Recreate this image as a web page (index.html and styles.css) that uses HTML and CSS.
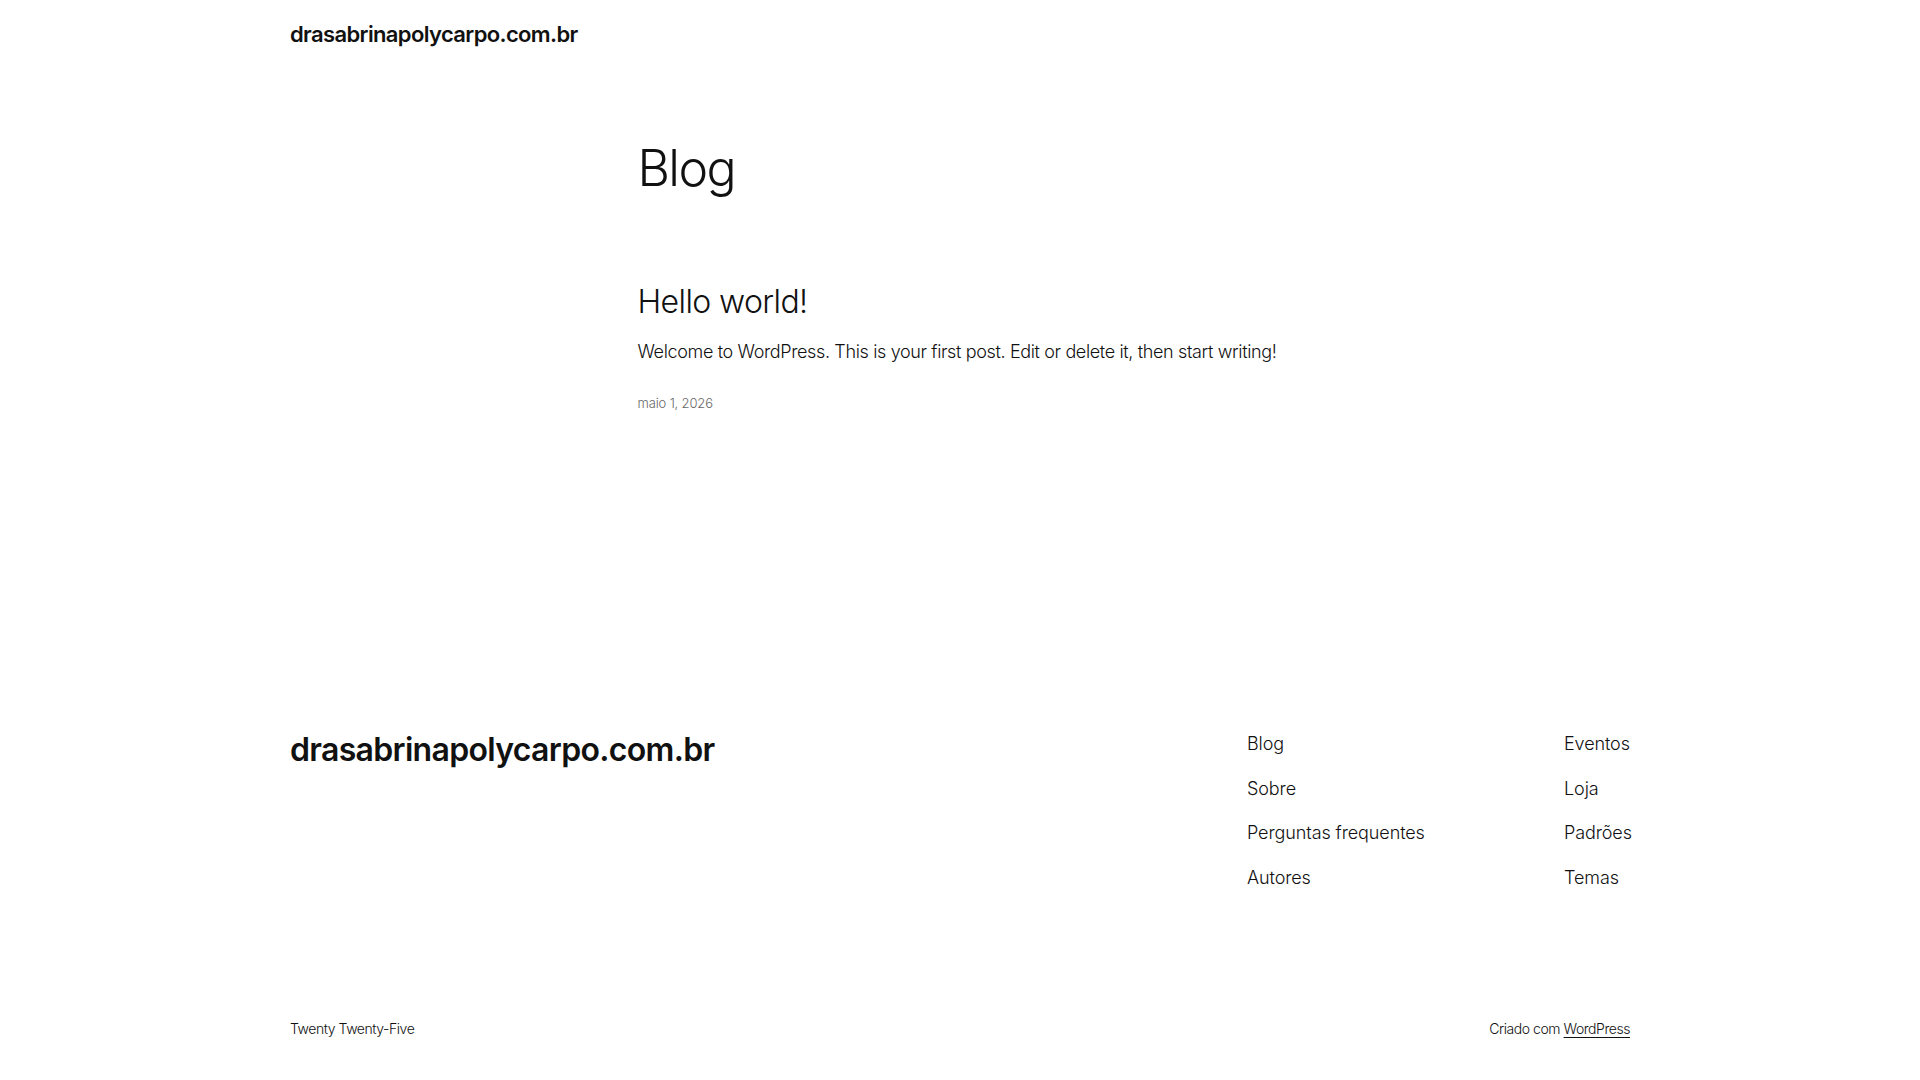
FILE: index.html
```html
<!DOCTYPE html>
<html lang="pt-BR">
<head>
<meta charset="utf-8">
<title>Blog – drasabrinapolycarpo.com.br</title>
<link rel="stylesheet" href="styles.css">
</head>
<body>
<header class="site-header">
  <div class="wide">
    <a class="site-title" href="#">drasabrinapolycarpo.com.br</a>
  </div>
</header>
<main class="site-main">
  <div class="content">
    <h1 class="page-title">Blog</h1>
    <article class="post">
      <h2 class="post-title"><a href="#">Hello world!</a></h2>
      <p class="post-excerpt">Welcome to WordPress. This is your first post. Edit or delete it, then start writing!</p>
      <time class="post-date">maio 1, 2026</time>
    </article>
  </div>
</main>
<footer class="site-footer">
  <div class="wide footer-top">
    <a class="footer-title" href="#">drasabrinapolycarpo.com.br</a>
    <nav class="footer-nav">
      <ul class="nav-col">
        <li><a href="#">Blog</a></li>
        <li><a href="#">Sobre</a></li>
        <li><a href="#">Perguntas frequentes</a></li>
        <li><a href="#">Autores</a></li>
      </ul>
      <ul class="nav-col">
        <li><a href="#">Eventos</a></li>
        <li><a href="#">Loja</a></li>
        <li><a href="#">Padrões</a></li>
        <li><a href="#">Temas</a></li>
      </ul>
    </nav>
  </div>
  <div class="wide footer-bottom">
    <p class="theme-name">Twenty Twenty-Five</p>
    <p class="credit">Criado com <a href="#">WordPress</a></p>
  </div>
</footer>
</body>
</html>
```
FILE: styles.css
```css
* { box-sizing: border-box; }

html, body {
  margin: 0;
  padding: 0;
  background: #ffffff;
}

body {
  font-family: "Inter", "Liberation Sans", sans-serif;
  font-weight: 300;
  color: #111111;
  -webkit-font-smoothing: antialiased;
}

a {
  color: inherit;
  text-decoration: none;
}

.wide {
  width: 1340px;
  margin: 0 auto;
}

.content {
  width: 645px;
  margin: 0 auto;
}

/* Header */
.site-header {
  padding: 19px 0 19px;
}

.site-title {
  display: block;
  font-size: 22px;
  line-height: 31px;
  font-weight: 600;
  letter-spacing: -0.63px;
}

/* Main */
.site-main {
  padding-top: 72px;
  min-height: 662px;
}

.page-title {
  margin: 0;
  font-size: 50px;
  line-height: 54px;
  font-weight: 300;
  letter-spacing: -1.6px;
}

.post {
  margin-top: 89px;
}

.post-title {
  margin: 0;
  font-size: 32px;
  line-height: 36px;
  font-weight: 300;
  letter-spacing: -0.6px;
}

.post-excerpt {
  margin: 19px 0 0;
  font-size: 18px;
  line-height: 25px;
  letter-spacing: -0.36px;
}

.post-date {
  display: block;
  margin-top: 29px;
  font-size: 13px;
  line-height: 20px;
  color: #686868;
  letter-spacing: -0.15px;
}

/* Footer */
.footer-top {
  display: flex;
  justify-content: space-between;
  align-items: flex-start;
}

.footer-title {
  font-size: 32px;
  line-height: 38px;
  font-weight: 600;
  letter-spacing: -0.68px;
}

.footer-nav {
  display: grid;
  grid-template-columns: 317px 66px;
}

.nav-col {
  list-style: none;
  margin: 0;
  padding: 0;
  display: flex;
  flex-direction: column;
  gap: 19.5px;
  white-space: nowrap;
}

.nav-col li {
  font-size: 18px;
  line-height: 25px;
  letter-spacing: -0.1px;
}

.footer-bottom {
  display: flex;
  justify-content: space-between;
  align-items: center;
  margin-top: 129px;
  padding-bottom: 40px;
}

.theme-name,
.credit {
  margin: 0;
  font-size: 14px;
  line-height: 20px;
  letter-spacing: -0.45px;
  color: #111111;
}

.credit a {
  text-decoration: underline;
  text-underline-offset: 3px;
  text-decoration-thickness: 1px;
}
```
